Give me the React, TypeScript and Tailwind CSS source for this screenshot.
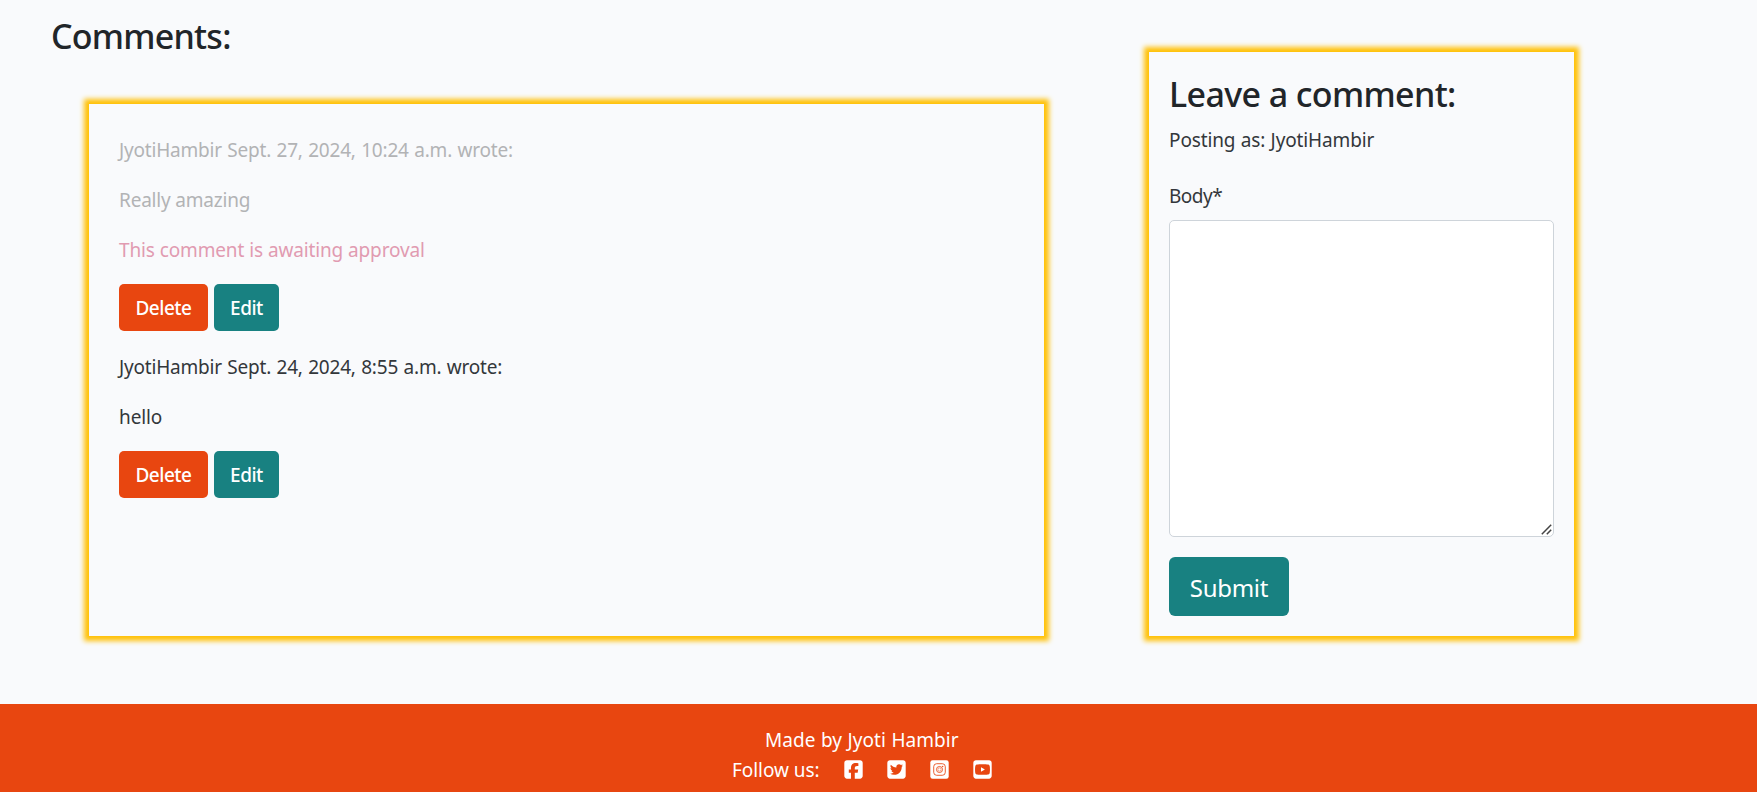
import { FaSquareFacebook, FaSquareTwitter, FaSquareYoutube } from "react-icons/fa6";

function InstagramSquare() {
  return (
    <svg width="21" height="21" viewBox="0 0 448 512" aria-hidden="true">
      <rect y="32" width="448" height="448" rx="56" fill="#fff" />
      <g fill="none" stroke="#e84610" strokeWidth="21">
        <rect x="83" y="115" width="282" height="282" rx="72" />
        <circle cx="224" cy="256" r="74" />
        <circle cx="224" cy="256" r="40" strokeWidth="12" />
      </g>
      <circle cx="302" cy="180" r="17" fill="#e84610" />
    </svg>
  );
}

function Actions() {
  return (
    <div className="flex gap-1.5 text-[19px] leading-[30px] font-medium tracking-[-0.5px] text-white">
      <button className="h-[47px] w-[89px] rounded-[5px] bg-[#e84610]">Delete</button>
      <button className="h-[47px] w-[65px] rounded-[5px] bg-[#188181]">Edit</button>
    </div>
  );
}

const panel = "bg-[#f9fafc] shadow-[0_0_5px_5px_#ffc107]";

export default function App() {
  return (
    <div className="flex h-[792px] w-full flex-col overflow-hidden bg-[#f9fafc] font-['Noto_Sans','Open_Sans',sans-serif] text-[19px] leading-[30px] text-[#33373b]">
      <main className="flex h-[704px] shrink-0">
        <section className="w-[1149px] shrink-0 pt-[15px] pl-[51px]">
          <h2 className="h-[89px] text-[34px] leading-[42px] font-medium tracking-[-0.75px] text-[#212529]">Comments:</h2>
          <div className={`ml-[38px] h-[532px] w-[955px] px-[30px] pt-[31px] ${panel}`}>
            <article className="mb-[21px] flex flex-col">
              <p className="mb-5 tracking-[-0.2px] text-[#b2b3b5] [word-spacing:0.7px]">JyotiHambir Sept. 27, 2024, 10:24 a.m. wrote:</p>
              <p className="mb-5 tracking-[-0.19px] text-[#b2b3b5]">Really amazing</p>
              <p className="mb-[19px] tracking-[-0.16px] text-[#e19bb1] [word-spacing:0.3px]">This comment is awaiting approval</p>
              <Actions />
            </article>
            <article className="flex flex-col">
              <p className="mb-5 tracking-[-0.2px] [word-spacing:0.7px]">JyotiHambir Sept. 24, 2024, 8:55 a.m. wrote:</p>
              <p className="mb-[19px] tracking-[-0.1px]">hello</p>
              <Actions />
            </article>
          </div>
        </section>
        <section className={`mt-[52px] h-[584px] w-[425px] p-5 ${panel}`}>
          <h2 className="mt-px mb-2.5 text-[34px] leading-[42px] font-medium tracking-[-0.62px] text-[#212529]">Leave a comment:</h2>
          <p className="mb-[26px] tracking-[-0.12px] [word-spacing:0.5px]">Posting as: JyotiHambir</p>
          <label htmlFor="body" className="mb-[9px] block tracking-[-0.5px]">Body*</label>
          <div className="relative">
            <textarea
              id="body"
              className="block h-[317px] w-[385px] resize-none rounded-[5px] border border-[#ced4da] bg-white"
            />
            <svg className="pointer-events-none absolute right-[2px] bottom-[2px] h-[11px] w-[11px]" viewBox="0 0 11 11" fill="none" stroke="#444" strokeWidth="1.5">
              <path d="M0.8 10.2 10.2 0.8M5.8 10.2l4.4-4.4" />
            </svg>
          </div>
          <button className="mt-5 h-[59px] w-[120px] rounded-[6px] bg-[#188181] pt-0.5 text-[24px] tracking-[-0.3px] text-white">Submit</button>
        </section>
      </main>
      <footer className="flex flex-1 flex-col items-start bg-[#e84610] pt-[21px] text-white">
        <p className="ml-[765px] tracking-[0.05px] [word-spacing:0.5px]">Made by Jyoti Hambir</p>
        <div className="ml-[732px] flex h-[30px] items-center">
          <span className="w-[111px] tracking-[-0.05px]">Follow us:</span>
          <div className="-mt-px flex gap-[22px] text-[21px]">
            <FaSquareFacebook />
            <FaSquareTwitter />
            <InstagramSquare />
            <FaSquareYoutube />
          </div>
        </div>
      </footer>
    </div>
  );
}
